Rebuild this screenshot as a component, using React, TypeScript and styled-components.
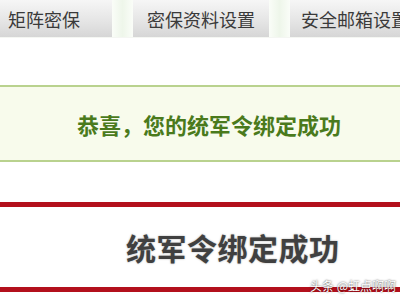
import React from "react";
import styled, { createGlobalStyle } from "styled-components";

const GlobalStyle = createGlobalStyle`
  html, body {
    margin: 0;
    padding: 0;
    background: #fff;
    font-family: "Noto Sans CJK SC", "Liberation Sans", sans-serif;
  }
`;

const tabs = [
  { label: "矩阵密保", width: 112 },
  { label: "密保资料设置", width: 136 },
  { label: "安全邮箱设置", width: 130 },
];

const App: React.FC = () => {
  return (
    <Page>
      <GlobalStyle />
      <TabBar>
        {tabs.map((tab, index) => (
          <React.Fragment key={tab.label}>
            {index > 0 && <TabGap />}
            <Tab $width={tab.width} $first={index === 0}>
              {tab.label}
            </Tab>
          </React.Fragment>
        ))}
      </TabBar>
      <SuccessBox>恭喜，您的统军令绑定成功</SuccessBox>
      <ResultPanel>
        <ResultTitle>统军令绑定成功</ResultTitle>
        <Watermark>头条 @虹点啊啊</Watermark>
      </ResultPanel>
    </Page>
  );
};

const Page = styled.div`
  width: 400px;
  height: 300px;
  overflow: hidden;
  display: flex;
  flex-direction: column;
`;

const TabBar = styled.div`
  display: flex;
  height: 37px;
  border-bottom: 1px solid #f4f6f2;
`;

const Tab = styled.div<{ $width: number; $first: boolean }>`
  flex: 0 0 ${(p) => p.$width}px;
  display: flex;
  align-items: center;
  justify-content: ${(p) => (p.$first ? "flex-start" : "center")};
  padding-left: ${(p) => (p.$first ? "8px" : "0")};
  box-sizing: border-box;
  background: linear-gradient(#f6f6f6, #e4e4e4 60%, #d6d6d6);
  color: #3a3a3a;
  font-size: 18px;
  white-space: nowrap;
  overflow: hidden;
`;

const TabGap = styled.div`
  flex: 0 0 21px;
  background: linear-gradient(90deg, #fafdf8, #eef6ea 50%, #fafdf8);
`;

const SuccessBox = styled.div`
  margin-top: 47px;
  height: 73px;
  display: flex;
  align-items: center;
  padding-left: 77px;
  background: #f8fbec;
  border-top: 2px solid #b9d28e;
  border-bottom: 2px solid #b9d28e;
  color: #4a7a1c;
  font-size: 22px;
  font-weight: bold;
`;

const ResultPanel = styled.div`
  position: relative;
  margin-top: 40px;
  height: 80px;
  display: flex;
  align-items: center;
  padding-left: 126px;
  border-top: 5px solid #b3101c;
  border-bottom: 5px solid #b3101c;
`;

const ResultTitle = styled.div`
  color: #404040;
  font-size: 30px;
  font-weight: bold;
  letter-spacing: 0.5px;
  text-shadow: 0 0 2px rgba(0, 0, 0, 0.35);
`;

const Watermark = styled.span`
  position: absolute;
  right: 4px;
  bottom: -7px;
  color: #fff;
  font-size: 12px;
  text-shadow: 0 0 2px rgba(0, 0, 0, 0.8);
`;

export default App;
